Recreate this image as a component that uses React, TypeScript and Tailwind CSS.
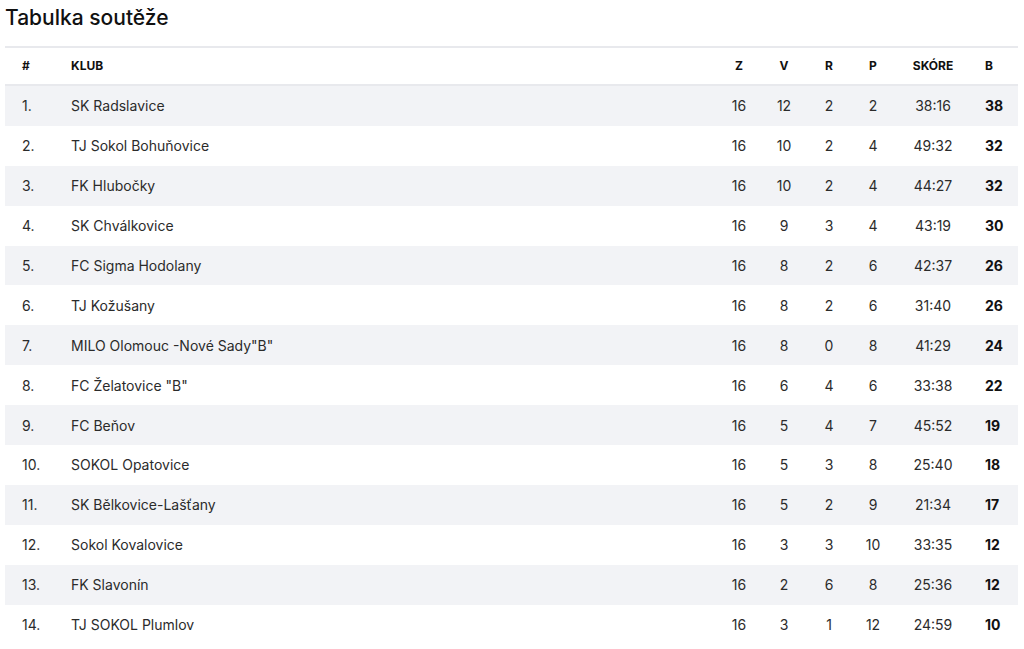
import React from 'react';

const rows: [string, string, number, number, number, number, string, number][] = [
	['1.', 'SK Radslavice', 16, 12, 2, 2, '38:16', 38],
	['2.', 'TJ Sokol Bohuňovice', 16, 10, 2, 4, '49:32', 32],
	['3.', 'FK Hlubočky', 16, 10, 2, 4, '44:27', 32],
	['4.', 'SK Chválkovice', 16, 9, 3, 4, '43:19', 30],
	['5.', 'FC Sigma Hodolany', 16, 8, 2, 6, '42:37', 26],
	['6.', 'TJ Kožušany', 16, 8, 2, 6, '31:40', 26],
	['7.', 'MILO Olomouc -Nové Sady"B"', 16, 8, 0, 8, '41:29', 24],
	['8.', 'FC Želatovice "B"', 16, 6, 4, 6, '33:38', 22],
	['9.', 'FC Beňov', 16, 5, 4, 7, '45:52', 19],
	['10.', 'SOKOL Opatovice', 16, 5, 3, 8, '25:40', 18],
	['11.', 'SK Bělkovice-Lašťany', 16, 5, 2, 9, '21:34', 17],
	['12.', 'Sokol Kovalovice', 16, 3, 3, 10, '33:35', 12],
	['13.', 'FK Slavonín', 16, 2, 6, 8, '25:36', 12],
	['14.', 'TJ SOKOL Plumlov', 16, 3, 1, 12, '24:59', 10],
];

const cols = 'grid grid-cols-[50px_1fr_44px_46px_44px_44px_76px_47px] items-center';

export default function App() {
	return (
		<div className="min-h-screen bg-white px-[5px] font-['Inter',sans-serif] text-[#2b2b2b]">
			<h2 className="pt-[4px] mb-[14px] text-[21px] leading-[28px] font-medium text-[#111]">
				Tabulka soutěže
			</h2>
			<div className="w-[1013px] border-t-2 border-[#e8e9ed]">
				{/* HEADER */}
				<div className={`${cols} h-[38px] border-b-2 border-[#e8e9ed] text-[12px] font-bold text-[#111]`}>
					<div className="pl-[17px]">#</div>
					<div className="pl-[16px]">KLUB</div>
					<div className="text-center">Z</div>
					<div className="text-center">V</div>
					<div className="text-center">R</div>
					<div className="text-center">P</div>
					<div className="text-center">SKÓRE</div>
					<div className="pl-[14px]">B</div>
				</div>
				{rows.map(([pos, club, z, v, r, p, score, b], i) => (
					<div
						key={pos}
						className={`${cols} h-[39.9px] text-[14px] ${i % 2 === 0 ? 'bg-[#f2f3f6]' : 'bg-white'}`}>
						<div className="pl-[17px]">{pos}</div>
						<div className="pl-[16px]">{club}</div>
						<div className="text-center">{z}</div>
						<div className="text-center">{v}</div>
						<div className="text-center">{r}</div>
						<div className="text-center">{p}</div>
						<div className="text-center">{score}</div>
						<div className="pl-[14px] font-bold text-[#111]">{b}</div>
					</div>
				))}
			</div>
		</div>
	);
}
